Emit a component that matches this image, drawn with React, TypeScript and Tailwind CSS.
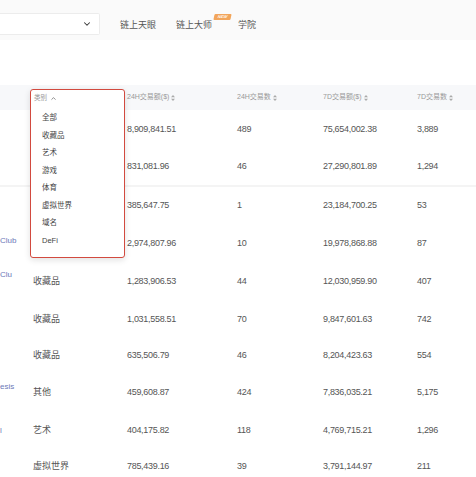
import { ChevronDown, ChevronUp } from "lucide-react";

const rows = [
  { h: "h-[39px]", name: "", nameOff: "", cat: "", a: "8,909,841.51", b: "489", c: "75,654,002.38", d: "3,889" },
  { h: "h-[38px]", name: "", nameOff: "", cat: "", a: "831,081.96", b: "46", c: "27,290,801.89", d: "1,294", line: true },
  { h: "h-[38px]", name: "", nameOff: "", cat: "", a: "385,647.75", b: "1", c: "23,184,700.25", d: "53" },
  { h: "h-[38px]", name: "Club", nameOff: "-mt-[6px]", cat: "", a: "2,974,807.96", b: "10", c: "19,978,868.88", d: "87" },
  { h: "h-[38px]", name: "Clu", nameOff: "-mt-[14px]", cat: "收藏品", a: "1,283,906.53", b: "44", c: "12,030,959.90", d: "407" },
  { h: "h-[37px]", name: "", nameOff: "", cat: "收藏品", a: "1,031,558.51", b: "70", c: "9,847,601.63", d: "742" },
  { h: "h-[35px]", name: "", nameOff: "", cat: "收藏品", a: "635,506.79", b: "46", c: "8,204,423.63", d: "554" },
  { h: "h-[39px]", name: "esis", nameOff: "-mt-[12px]", cat: "其他", a: "459,608.87", b: "424", c: "7,836,035.21", d: "5,175" },
  { h: "h-[37px]", name: "l", nameOff: "", cat: "艺术", a: "404,175.82", b: "118", c: "4,769,715.21", d: "1,296" },
  { h: "h-[36px]", name: "", nameOff: "", cat: "虚拟世界", a: "785,439.16", b: "39", c: "3,791,144.97", d: "211" },
];

const menu = ["全部", "收藏品", "艺术", "游戏", "体育", "虚拟世界", "域名", "DeFi"];

function SortIcon() {
  return (
    <span className="inline-flex flex-col ml-[2px] leading-none text-[#aaa]">
      <svg width="4" height="6" viewBox="0 0 4 6">
        <path d="M2 0 L4 2.3 L0 2.3 Z M2 6 L4 3.7 L0 3.7 Z" fill="currentColor" />
      </svg>
    </span>
  );
}

export default function App() {
  return (
    <div
      className="relative w-[476px] h-[477px] overflow-hidden bg-white text-[#555]"
      style={{ fontFamily: '"Liberation Sans", "Noto Sans CJK SC", sans-serif' }}
    >
      {/* top bar */}
      <div className="h-[40px] bg-[#fafafa] flex items-center pt-[8px]">
        <div className="w-[100px] h-[22px] bg-white border border-[#ececec] border-l-0 rounded-r-[2px] flex items-center justify-end pr-[7px]">
          <ChevronDown size={10} strokeWidth={2.5} className="text-[#333]" />
        </div>
        <div className="flex items-center ml-[20px] mt-[4px] text-[9px] text-[#555]">
          <span>链上天眼</span>
          <span className="ml-[20px] relative">
            链上大师
            <span className="absolute left-[38px] -top-[5px] w-[17px] h-[6px] bg-[#f2a55b] -skew-x-12 rounded-[1px] text-[4px] leading-[6px] text-white text-center italic font-bold">
              NEW
            </span>
          </span>
          <span className="ml-[26px]">学院</span>
        </div>
      </div>

      {/* table */}
      <div className="mt-[45px]">
        <div className="h-[25px] bg-[#f7f8fa] flex items-center text-[7px] text-[#999]">
          <div className="w-[33px]" />
          <div className="w-[94px]" />
          <div className="w-[110px] flex items-center">24H交易额($)<SortIcon /></div>
          <div className="w-[86px] flex items-center">24H交易数<SortIcon /></div>
          <div className="w-[94px] flex items-center">7D交易额($)<SortIcon /></div>
          <div className="flex-1 flex items-center">7D交易数<SortIcon /></div>
        </div>
        {rows.map((r, i) => (
          <div
            key={i}
            className={`${r.h} flex items-center text-[9px] tracking-[-0.3px] ${r.line ? "border-b-2 border-[#f4f4f4]" : ""}`}
          >
            <div className={`w-[33px] whitespace-nowrap text-[8px] text-[#6b78b8] tracking-normal ${r.nameOff}`}>
              {r.name}
            </div>
            <div className="w-[94px] tracking-normal">{r.cat}</div>
            <div className="w-[110px]">{r.a}</div>
            <div className="w-[86px]">{r.b}</div>
            <div className="w-[94px]">{r.c}</div>
            <div className="flex-1">{r.d}</div>
          </div>
        ))}
      </div>

      {/* category dropdown */}
      <div className="absolute left-[30px] top-[89px] w-[95px] h-[169px] bg-white border-[1.5px] border-[#d24a3f] rounded-[3px] shadow-[0_2px_6px_rgba(0,0,0,0.12)]">
        <div className="flex items-center pl-[3px] pt-[3px] h-[13px] text-[6.5px] text-[#999]">
          类别
          <ChevronUp size={7} strokeWidth={2.5} className="ml-[3px] text-[#666]" />
        </div>
        <div className="flex flex-col pl-[11px] pt-[6px]">
          {menu.map((m) => (
            <div key={m} className="h-[17.5px] text-[7.5px] text-[#444] flex items-center">
              {m}
            </div>
          ))}
        </div>
      </div>
    </div>
  );
}
